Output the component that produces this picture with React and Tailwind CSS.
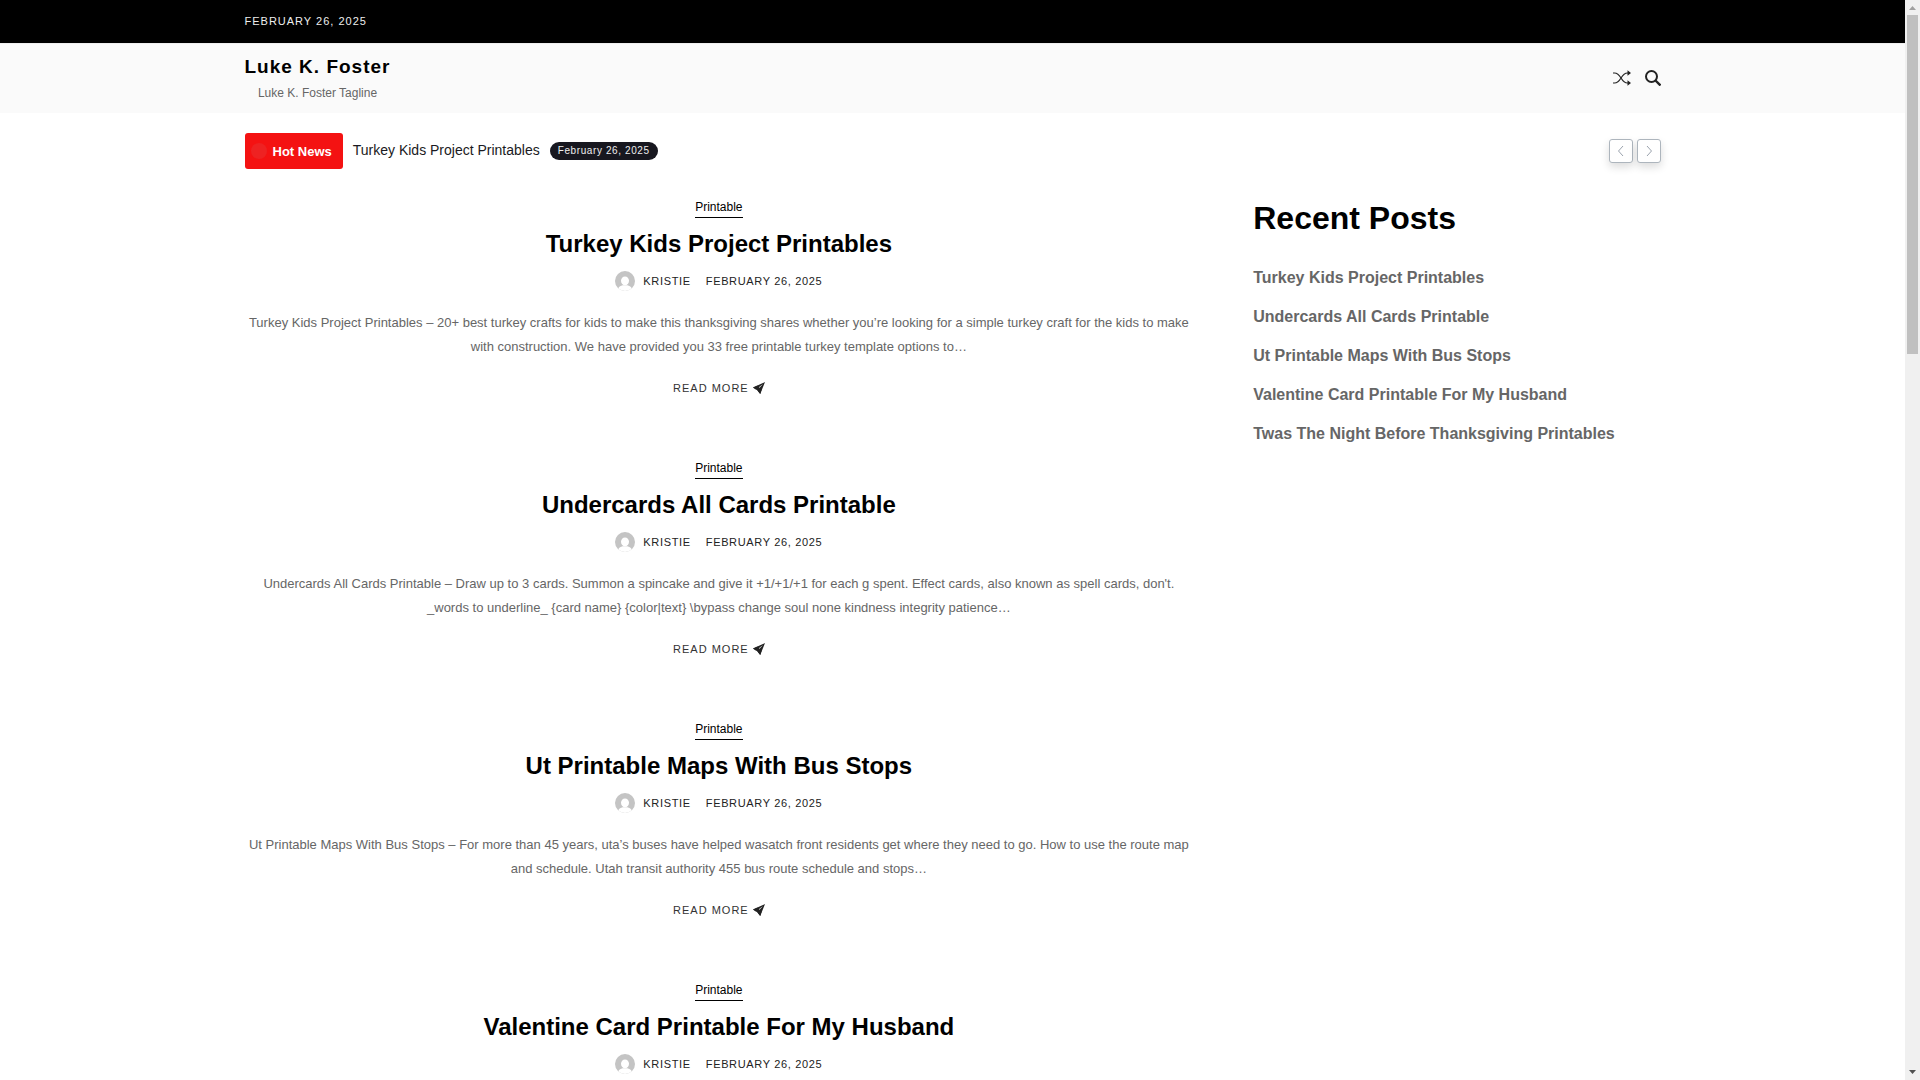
import React from "react";

const posts = [
  {
    title: "Turkey Kids Project Printables",
    text: "Turkey Kids Project Printables – 20+ best turkey crafts for kids to make this thanksgiving shares whether you’re looking for a simple turkey craft for the kids to make with construction. We have provided you 33 free printable turkey template options to…",
  },
  {
    title: "Undercards All Cards Printable",
    text: "Undercards All Cards Printable – Draw up to 3 cards. Summon a spincake and give it +1/+1/+1 for each g spent. Effect cards, also known as spell cards, don't. _words to underline_ {card name} {color|text} \\bypass change soul none kindness integrity patience…",
  },
  {
    title: "Ut Printable Maps With Bus Stops",
    text: "Ut Printable Maps With Bus Stops – For more than 45 years, uta’s buses have helped wasatch front residents get where they need to go. How to use the route map and schedule. Utah transit authority 455 bus route schedule and stops…",
  },
  {
    title: "Valentine Card Printable For My Husband",
  },
];

const recent = [
  "Turkey Kids Project Printables",
  "Undercards All Cards Printable",
  "Ut Printable Maps With Bus Stops",
  "Valentine Card Printable For My Husband",
  "Twas The Night Before Thanksgiving Printables",
];

function Avatar() {
  return (
    <svg viewBox="0 0 20 20" className="size-5 rounded-full" aria-hidden="true">
      <rect width="20" height="20" fill="#c4c4c4" />
      <ellipse cx="10" cy="9.8" rx="4" ry="4.4" fill="#fff" />
      <path d="M2.6 20c.3-3.600 2-5 5-5.800h4.800c3 .8 4.700 2.200 5 5.800z" fill="#fff" />
    </svg>
  );
}

function Plane() {
  return (
    <svg viewBox="0 0 12 12" className="size-3" aria-hidden="true">
      <path d="M12 0 0 5.500l3 1.900L9.800 2.200 4.300 8.200l2.900 3.800z" fill="#222" />
      <path d="M3 7.400 9.800 2.200 4.300 8.200z" fill="#aaa" />
      <path d="M0 5.500l3 1.900 1.300.8L7.200 12l1.300-3.700L4.500 3.600z" fill="#222" />
    </svg>
  );
}

function Shuffle() {
  return (
    <svg viewBox="0 0 18 16" className="h-4 w-[18px]" fill="none" stroke="#222" strokeWidth="1.2" aria-hidden="true">
      <path d="M0 3h1.500c3 0 4.700 2 6.500 5s3.500 5 6.500 5H15M0 13h1.500c3 0 4.700-2 6.500-5s3.500-5 6.500-5H15" />
      <path d="M14.500.3 18 3l-3.500 2.700zM14.500 10.300 18 13l-3.500 2.700z" fill="#222" stroke="none" />
    </svg>
  );
}

function Search() {
  return (
    <svg viewBox="0 0 16 16" className="size-4" fill="none" stroke="#222" strokeWidth="2" aria-hidden="true">
      <circle cx="6.500" cy="6.500" r="5.500" />
      <path d="m10.500 10.500 5 5" strokeWidth="2.400" />
    </svg>
  );
}

function Arrow({ label, d }) {
  return (
    <button
      type="button"
      aria-label={label}
      className="flex size-6 items-center justify-center rounded-[3px] border border-[#adb5bd] bg-white shadow-[0_4px_8px_rgba(0,0,0,0.14)]"
    >
      <svg viewBox="0 0 12 12" className="size-3" fill="none" stroke="#9aa2ad" aria-hidden="true">
        <path d={d} />
      </svg>
    </button>
  );
}

function Post({ title, text }) {
  return (
    <article className="mb-[60px] flex flex-col items-center text-center">
      <a href="#category" className="border-b border-black text-xs leading-5 text-black">
        Printable
      </a>
      <h2 className="mt-2.5 text-2xl leading-8 font-bold text-black">
        <a href="#post">{title}</a>
      </h2>
      <div className="mt-[11px] flex h-5 items-center text-[11px] leading-5 tracking-[0.06em] text-[#222] uppercase">
        <Avatar />
        <a href="#author" className="ml-2">Kristie</a>
        <time className="ml-[15px]">February 26, 2025</time>
      </div>
      {text && (
        <>
          <p className="mt-5 text-[13px] leading-6 text-[#666]">{text}</p>
          <a
            href="#more"
            className="mt-[19px] flex h-5 items-center gap-1 text-[11px] leading-5 tracking-[1px] text-[#333] uppercase"
          >
            Read more
            <Plane />
          </a>
        </>
      )}
    </article>
  );
}

const container = "mx-auto w-full max-w-[1440px] px-3";

export default function App() {
  return (
    <div className="flex h-screen overflow-hidden bg-white font-['Liberation_Sans',Arial,sans-serif]">
      <div className="min-w-0 flex-1 overflow-hidden">
        <div className="bg-black">
          <div className={container}>
            <time className="block pt-[11px] pb-3 text-[11px] leading-5 tracking-[1px] text-[#eee] uppercase">
              February 26, 2025
            </time>
          </div>
        </div>

        <header className="border-t border-[#eee] bg-[#fafafa]">
          <div className={`${container} flex items-center justify-between`}>
            <div className="flex flex-col items-center pt-2 pb-2">
              <a href="#home" className="text-[19px] leading-[30px] font-bold tracking-[1px] text-black">
                Luke K. Foster
              </a>
              <p className="text-xs leading-[23px] text-[#666]">Luke K. Foster Tagline</p>
            </div>
            <div className="flex items-center gap-3.5 pb-0.5">
              <button type="button" aria-label="Random post">
                <Shuffle />
              </button>
              <button type="button" aria-label="Search">
                <Search />
              </button>
            </div>
          </div>
        </header>

        <section className={`${container} mt-5 flex items-center justify-between`}>
          <div className="flex items-center">
            <strong className="flex h-9 items-center gap-1.5 rounded-[3px] bg-[#f41212] pr-[11px] pl-1.5 text-[13px] leading-5 text-white">
              <span className="size-4 rounded-full bg-[#ee2222]" />
              <span className="pt-0.5">Hot News</span>
            </strong>
            <div className="flex items-center gap-2.5 pl-2.5">
              <a href="#post" className="pb-0.5 text-sm text-[#1a1a22]">
                Turkey Kids Project Printables
              </a>
              <time className="h-[18px] rounded-full bg-[#17171f] px-2 text-[10px] leading-[17px] tracking-[0.06em] text-[#eee]">
                February 26, 2025
              </time>
            </div>
          </div>
          <div className="flex gap-1">
            <Arrow label="Previous" d="M8 1 3.500 6 8 11" />
            <Arrow label="Next" d="m4 1 4.500 5L4 11" />
          </div>
        </section>

        <div className={`${container} mt-7 flex`}>
          <main className="w-[67%]">
            {posts.map((p) => (
              <Post key={p.title} {...p} />
            ))}
          </main>
          <aside className="w-[33%] pt-px pl-[60px]">
            <h2 className="text-[32px] leading-10 font-bold text-black">Recent Posts</h2>
            <ul className="mt-7 flex flex-col gap-[15px]">
              {recent.map((t) => (
                <li key={t} className="leading-6 font-bold text-[#666]">
                  <a href="#post">{t}</a>
                </li>
              ))}
            </ul>
          </aside>
        </div>
      </div>

      <div className="flex w-[15px] flex-col items-center bg-[#f0f0f0]" aria-hidden="true">
        <svg viewBox="0 0 15 15" className="size-[15px] shrink-0" fill="#a0a0a0">
          <path d="M4 10 7.500 6 11 10z" />
        </svg>
        <div className="min-h-0 flex-1">
          <div className="h-[32.3%] w-[11px] bg-[#c0c0c0]" />
        </div>
        <svg viewBox="0 0 15 15" className="size-[15px] shrink-0" fill="#505050">
          <path d="M4 5h7L7.500 9z" />
        </svg>
      </div>
    </div>
  );
}
